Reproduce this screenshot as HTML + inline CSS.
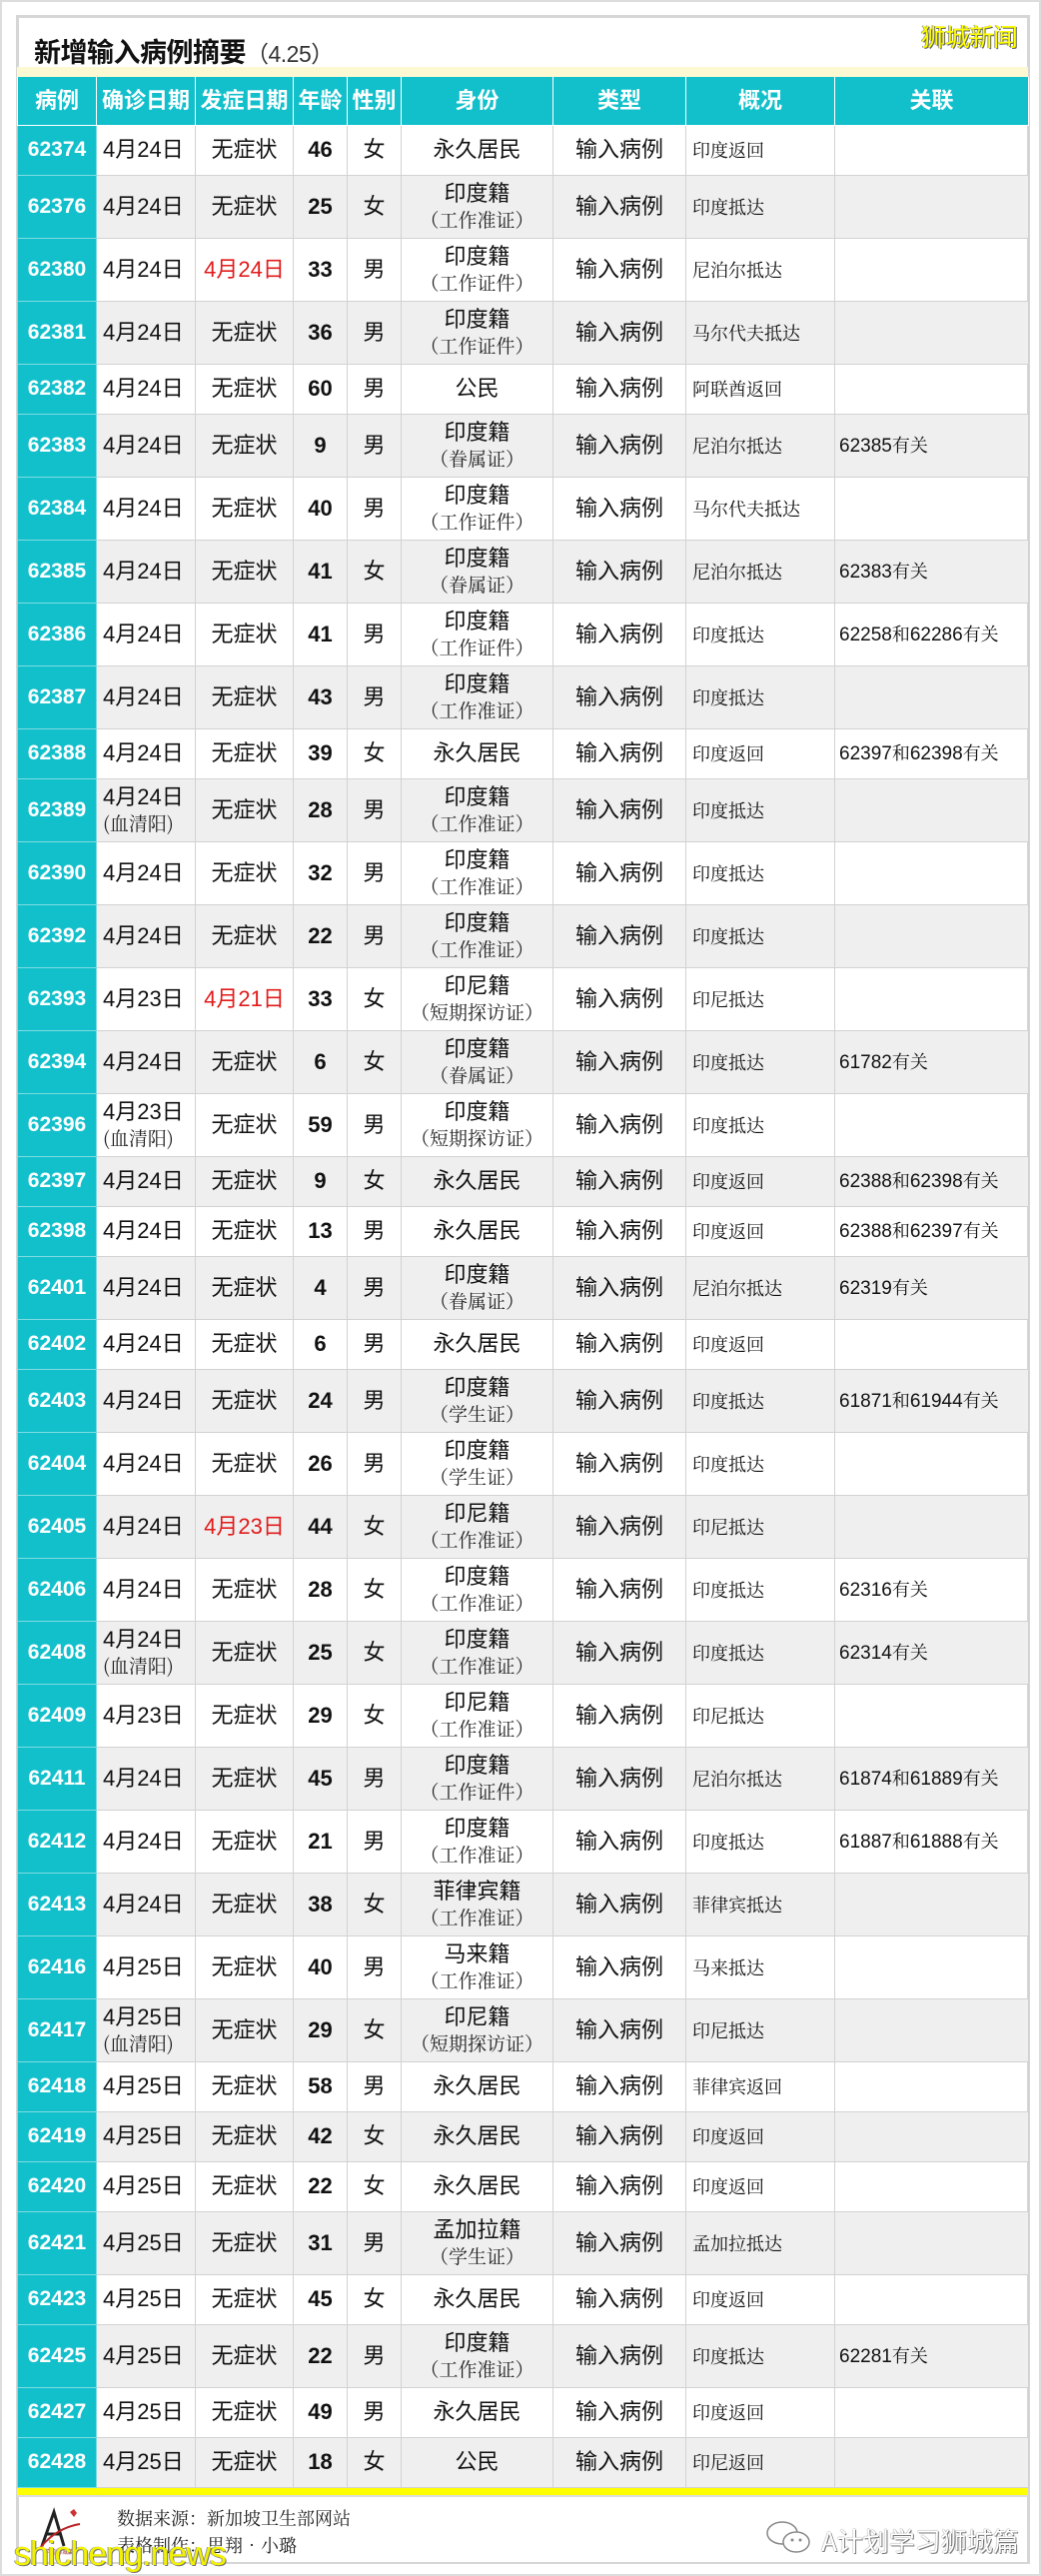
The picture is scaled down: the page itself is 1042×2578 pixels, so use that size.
<!DOCTYPE html>
<html><head><meta charset="utf-8"><style>
*{margin:0;padding:0;box-sizing:border-box}
html,body{width:1042px;height:2578px;background:#fff;overflow:hidden}
body{position:relative;font-family:"Liberation Sans","Noto Sans CJK SC",sans-serif;border:2px solid #ddd}
.card{position:absolute;left:14px;top:13px;width:1015px;height:2551px;border:3px solid #d6d6d6;border-bottom:2px solid #d6d6d6;background:#fff}
.title{position:absolute;left:32px;top:29px;font-size:27px;font-weight:bold;color:#111;letter-spacing:-0.5px}
.title span{font-weight:normal;font-size:23px;color:#333}
.brand{position:absolute;left:920px;top:16px;font-size:25px;color:#ffff00;text-shadow:1px 1px 0 #666,-1px 0 0 #999;font-family:"Noto Sans CJK SC",sans-serif;letter-spacing:-1px}
.strip{position:absolute;left:15px;top:65px;width:1012px;height:10px;background:#fcf9d2}
table{position:absolute;left:15px;top:75px;width:1012px;border-collapse:collapse;table-layout:fixed}
td,th{border:1px solid #d2d2d2;text-align:center;vertical-align:middle;font-size:22px;color:#111;line-height:26px;overflow:hidden;white-space:nowrap;padding:0}
th{background:#12c0cc;color:#fff;font-weight:bold;height:48px;border-color:#fff;border-top:none}
thead tr{height:48px}
tbody tr{height:63px}
tbody tr.s{height:50px}
tbody tr:nth-child(even) td{background:#efefef}
td:first-child{background:#12c0cc!important;color:#fff;font-weight:bold;font-size:21px;border-color:#7fdbe1}
td:nth-child(2){text-align:left;padding-left:6px}
td:nth-child(4){font-weight:bold}
td:nth-child(8),td:nth-child(9){text-align:left;padding-left:6px;font-family:"Noto Serif CJK SC",serif;font-size:18px}
td:nth-child(9){padding-left:4px}
td:nth-child(9) b{font-weight:normal;font-family:"Liberation Sans",sans-serif;font-size:19px}
small{display:block;font-family:"Noto Serif CJK SC",serif;font-size:19px;line-height:25px;color:#222}
.r{color:#e21b1b}
.ybar{position:absolute;left:15px;top:2488px;width:1012px;height:9px;background:#ffff00;border-bottom:2px solid #ddd}
.foot{position:absolute;left:115px;font-family:"Noto Serif CJK SC",serif;font-size:18px;color:#222}
.wx{position:absolute;left:820px;top:2522px;font-size:26px;color:#fff;text-shadow:0 0 1px #333,1px 1px 0 #888;font-family:"Noto Sans CJK SC",sans-serif}
.wm{position:absolute;left:12px;top:2535px;font-size:34px;color:#f2f200;text-shadow:1px 1px 0 #777,-1px 0 0 #999;letter-spacing:-1px}
</style></head><body>
<div class="card"></div>
<div class="title">新增输入病例摘要<span>（4.25）</span></div>
<div class="brand">狮城新闻</div>
<div class="strip"></div>
<table>
<colgroup><col style="width:79px"><col style="width:99px"><col style="width:98px"><col style="width:54px"><col style="width:54px"><col style="width:152px"><col style="width:133px"><col style="width:149px"><col style="width:194px"></colgroup>
<thead><tr><th>病例</th><th>确诊日期</th><th>发症日期</th><th>年龄</th><th>性别</th><th>身份</th><th>类型</th><th>概况</th><th>关联</th></tr></thead>
<tbody>
<tr class="s"><td>62374</td><td>4月24日</td><td>无症状</td><td>46</td><td>女</td><td>永久居民</td><td>输入病例</td><td>印度返回</td><td></td></tr>
<tr><td>62376</td><td>4月24日</td><td>无症状</td><td>25</td><td>女</td><td>印度籍<small>（工作准证）</small></td><td>输入病例</td><td>印度抵达</td><td></td></tr>
<tr><td>62380</td><td>4月24日</td><td class="r">4月24日</td><td>33</td><td>男</td><td>印度籍<small>（工作证件）</small></td><td>输入病例</td><td>尼泊尔抵达</td><td></td></tr>
<tr><td>62381</td><td>4月24日</td><td>无症状</td><td>36</td><td>男</td><td>印度籍<small>（工作证件）</small></td><td>输入病例</td><td>马尔代夫抵达</td><td></td></tr>
<tr class="s"><td>62382</td><td>4月24日</td><td>无症状</td><td>60</td><td>男</td><td>公民</td><td>输入病例</td><td>阿联酋返回</td><td></td></tr>
<tr><td>62383</td><td>4月24日</td><td>无症状</td><td>9</td><td>男</td><td>印度籍<small>（眷属证）</small></td><td>输入病例</td><td>尼泊尔抵达</td><td><b>62385</b>有关</td></tr>
<tr><td>62384</td><td>4月24日</td><td>无症状</td><td>40</td><td>男</td><td>印度籍<small>（工作证件）</small></td><td>输入病例</td><td>马尔代夫抵达</td><td></td></tr>
<tr><td>62385</td><td>4月24日</td><td>无症状</td><td>41</td><td>女</td><td>印度籍<small>（眷属证）</small></td><td>输入病例</td><td>尼泊尔抵达</td><td><b>62383</b>有关</td></tr>
<tr><td>62386</td><td>4月24日</td><td>无症状</td><td>41</td><td>男</td><td>印度籍<small>（工作证件）</small></td><td>输入病例</td><td>印度抵达</td><td><b>62258</b>和<b>62286</b>有关</td></tr>
<tr><td>62387</td><td>4月24日</td><td>无症状</td><td>43</td><td>男</td><td>印度籍<small>（工作准证）</small></td><td>输入病例</td><td>印度抵达</td><td></td></tr>
<tr class="s"><td>62388</td><td>4月24日</td><td>无症状</td><td>39</td><td>女</td><td>永久居民</td><td>输入病例</td><td>印度返回</td><td><b>62397</b>和<b>62398</b>有关</td></tr>
<tr><td>62389</td><td>4月24日<small>(血清阳)</small></td><td>无症状</td><td>28</td><td>男</td><td>印度籍<small>（工作准证）</small></td><td>输入病例</td><td>印度抵达</td><td></td></tr>
<tr><td>62390</td><td>4月24日</td><td>无症状</td><td>32</td><td>男</td><td>印度籍<small>（工作准证）</small></td><td>输入病例</td><td>印度抵达</td><td></td></tr>
<tr><td>62392</td><td>4月24日</td><td>无症状</td><td>22</td><td>男</td><td>印度籍<small>（工作准证）</small></td><td>输入病例</td><td>印度抵达</td><td></td></tr>
<tr><td>62393</td><td>4月23日</td><td class="r">4月21日</td><td>33</td><td>女</td><td>印尼籍<small>（短期探访证）</small></td><td>输入病例</td><td>印尼抵达</td><td></td></tr>
<tr><td>62394</td><td>4月24日</td><td>无症状</td><td>6</td><td>女</td><td>印度籍<small>（眷属证）</small></td><td>输入病例</td><td>印度抵达</td><td><b>61782</b>有关</td></tr>
<tr><td>62396</td><td>4月23日<small>(血清阳)</small></td><td>无症状</td><td>59</td><td>男</td><td>印度籍<small>（短期探访证）</small></td><td>输入病例</td><td>印度抵达</td><td></td></tr>
<tr class="s"><td>62397</td><td>4月24日</td><td>无症状</td><td>9</td><td>女</td><td>永久居民</td><td>输入病例</td><td>印度返回</td><td><b>62388</b>和<b>62398</b>有关</td></tr>
<tr class="s"><td>62398</td><td>4月24日</td><td>无症状</td><td>13</td><td>男</td><td>永久居民</td><td>输入病例</td><td>印度返回</td><td><b>62388</b>和<b>62397</b>有关</td></tr>
<tr><td>62401</td><td>4月24日</td><td>无症状</td><td>4</td><td>男</td><td>印度籍<small>（眷属证）</small></td><td>输入病例</td><td>尼泊尔抵达</td><td><b>62319</b>有关</td></tr>
<tr class="s"><td>62402</td><td>4月24日</td><td>无症状</td><td>6</td><td>男</td><td>永久居民</td><td>输入病例</td><td>印度返回</td><td></td></tr>
<tr><td>62403</td><td>4月24日</td><td>无症状</td><td>24</td><td>男</td><td>印度籍<small>（学生证）</small></td><td>输入病例</td><td>印度抵达</td><td><b>61871</b>和<b>61944</b>有关</td></tr>
<tr><td>62404</td><td>4月24日</td><td>无症状</td><td>26</td><td>男</td><td>印度籍<small>（学生证）</small></td><td>输入病例</td><td>印度抵达</td><td></td></tr>
<tr><td>62405</td><td>4月24日</td><td class="r">4月23日</td><td>44</td><td>女</td><td>印尼籍<small>（工作准证）</small></td><td>输入病例</td><td>印尼抵达</td><td></td></tr>
<tr><td>62406</td><td>4月24日</td><td>无症状</td><td>28</td><td>女</td><td>印度籍<small>（工作准证）</small></td><td>输入病例</td><td>印度抵达</td><td><b>62316</b>有关</td></tr>
<tr><td>62408</td><td>4月24日<small>(血清阳)</small></td><td>无症状</td><td>25</td><td>女</td><td>印度籍<small>（工作准证）</small></td><td>输入病例</td><td>印度抵达</td><td><b>62314</b>有关</td></tr>
<tr><td>62409</td><td>4月23日</td><td>无症状</td><td>29</td><td>女</td><td>印尼籍<small>（工作准证）</small></td><td>输入病例</td><td>印尼抵达</td><td></td></tr>
<tr><td>62411</td><td>4月24日</td><td>无症状</td><td>45</td><td>男</td><td>印度籍<small>（工作证件）</small></td><td>输入病例</td><td>尼泊尔抵达</td><td><b>61874</b>和<b>61889</b>有关</td></tr>
<tr><td>62412</td><td>4月24日</td><td>无症状</td><td>21</td><td>男</td><td>印度籍<small>（工作准证）</small></td><td>输入病例</td><td>印度抵达</td><td><b>61887</b>和<b>61888</b>有关</td></tr>
<tr><td>62413</td><td>4月24日</td><td>无症状</td><td>38</td><td>女</td><td>菲律宾籍<small>（工作准证）</small></td><td>输入病例</td><td>菲律宾抵达</td><td></td></tr>
<tr><td>62416</td><td>4月25日</td><td>无症状</td><td>40</td><td>男</td><td>马来籍<small>（工作准证）</small></td><td>输入病例</td><td>马来抵达</td><td></td></tr>
<tr><td>62417</td><td>4月25日<small>(血清阳)</small></td><td>无症状</td><td>29</td><td>女</td><td>印尼籍<small>（短期探访证）</small></td><td>输入病例</td><td>印尼抵达</td><td></td></tr>
<tr class="s"><td>62418</td><td>4月25日</td><td>无症状</td><td>58</td><td>男</td><td>永久居民</td><td>输入病例</td><td>菲律宾返回</td><td></td></tr>
<tr class="s"><td>62419</td><td>4月25日</td><td>无症状</td><td>42</td><td>女</td><td>永久居民</td><td>输入病例</td><td>印度返回</td><td></td></tr>
<tr class="s"><td>62420</td><td>4月25日</td><td>无症状</td><td>22</td><td>女</td><td>永久居民</td><td>输入病例</td><td>印度返回</td><td></td></tr>
<tr><td>62421</td><td>4月25日</td><td>无症状</td><td>31</td><td>男</td><td>孟加拉籍<small>（学生证）</small></td><td>输入病例</td><td>孟加拉抵达</td><td></td></tr>
<tr class="s"><td>62423</td><td>4月25日</td><td>无症状</td><td>45</td><td>女</td><td>永久居民</td><td>输入病例</td><td>印度返回</td><td></td></tr>
<tr><td>62425</td><td>4月25日</td><td>无症状</td><td>22</td><td>男</td><td>印度籍<small>（工作准证）</small></td><td>输入病例</td><td>印度抵达</td><td><b>62281</b>有关</td></tr>
<tr class="s"><td>62427</td><td>4月25日</td><td>无症状</td><td>49</td><td>男</td><td>永久居民</td><td>输入病例</td><td>印度返回</td><td></td></tr>
<tr class="s"><td>62428</td><td>4月25日</td><td>无症状</td><td>18</td><td>女</td><td>公民</td><td>输入病例</td><td>印尼返回</td><td></td></tr>
</tbody></table>
<div class="ybar"></div>
<svg style="position:absolute;left:34px;top:2506px" width="56" height="50" viewBox="0 0 56 50">
<path d="M6 40 L18 6 L28 40 M11 28 L25 28" stroke="#222" stroke-width="3" fill="none"/>
<path d="M4 42 Q20 22 44 18" stroke="#b22" stroke-width="2" fill="none"/>
<path d="M34 6 l4 -3 l3 4 l-3 4 z" fill="#c33"/>
<text x="8" y="48" font-size="6" fill="#a33" font-family="Noto Sans CJK SC">学习狮城篇</text>
</svg>
<div class="foot" style="top:2505px">数据来源：新加坡卫生部网站</div>
<div class="foot" style="top:2532px">表格制作：思翔•小璐</div>
<svg style="position:absolute;left:763px;top:2518px" width="52" height="40" viewBox="0 0 52 40">
<ellipse cx="18" cy="15" rx="15" ry="11" fill="#fff" stroke="#888" stroke-width="1.5"/>
<ellipse cx="32" cy="24" rx="13" ry="10" fill="#fff" stroke="#888" stroke-width="1.5"/>
<circle cx="28" cy="22" r="1.5" fill="#888"/><circle cx="36" cy="22" r="1.5" fill="#888"/>
</svg>
<div class="wx">A计划学习狮城篇</div>
<div class="wm">shicheng.news</div>
</body></html>
